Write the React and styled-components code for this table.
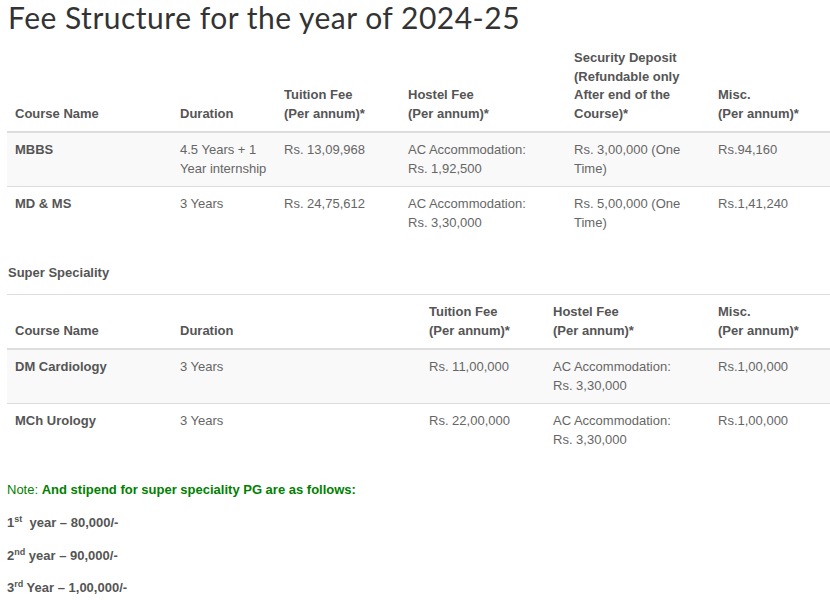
import styled, { createGlobalStyle } from 'styled-components'

/* ── Page defaults ─────────────────────────────────────────── */
const GlobalStyle = createGlobalStyle`
  html, body {
    margin: 0;
    padding: 0;
    background: #fff;
    overflow-x: hidden;
  }
  body {
    font-family: "Liberation Sans", Arial, sans-serif;
    font-size: 13px;
    line-height: 1.42857;
    color: #666;
  }
`

const Page = styled.div`
  padding: 0 0 0 7px;
  width: 823px;
`

const Heading = styled.h2`
  font-family: Lato, "Open Sans", sans-serif;
  font-weight: 400;
  font-size: 30px;
  line-height: 34px;
  color: #333;
  margin: 0 0 7px 1px;
  letter-spacing: 0.5px;
`

/* ── Table ─────────────────────────────────────────────────── */
const Table = styled.table`
  width: 100%;
  border-collapse: collapse;
  border-spacing: 0;
  table-layout: fixed;
  margin-bottom: ${p => p.$gap}px;
`

const Th = styled.th`
  text-align: left;
  vertical-align: bottom;
  font-weight: 700;
  color: #555;
  padding: 8px;
  border-bottom: 2px solid #ddd;
  border-top: ${p => (p.$top ? '1px solid #ddd' : '0')};
`

const Row = styled.tr`
  background: ${p => (p.$striped ? '#f9f9f9' : 'transparent')};
`

const Td = styled.td`
  padding: 8px;
  vertical-align: top;
  border-top: ${p => (p.$first ? '0' : '1px solid #ddd')};
  font-weight: ${p => (p.$bold ? 700 : 400)};
  color: ${p => (p.$bold ? '#555' : '#666')};
`

const SubHeading = styled.p`
  margin: 0 0 12px 1px;
  font-weight: 700;
  color: #555;
`

/* ── Notes ─────────────────────────────────────────────────── */
const Note = styled.p`
  margin: 0 0 14px 0;
  color: #008000;
  strong { font-weight: 700; }
`

const Stipend = styled.p`
  margin: 0 0 14px 0;
  font-weight: 700;
  color: #555;
  sup {
    font-size: 9px;
    line-height: 0;
    vertical-align: baseline;
    position: relative;
    top: -5px;
  }
`

const mainCols = [165, 104, 124, 166, 144, 120]
const superCols = [165, 249, 124, 165, 120]

const mainHead = [
  'Course Name',
  'Duration',
  <>Tuition Fee<br />(Per annum)*</>,
  <>Hostel Fee<br />(Per annum)*</>,
  <>Security Deposit<br />(Refundable only<br />After end of the<br />Course)*</>,
  <>Misc.<br />(Per annum)*</>,
  '',
]

const mainRows = [
  ['MBBS', '4.5 Years + 1 Year internship', 'Rs. 13,09,968', <>AC Accommodation:<br />Rs. 1,92,500</>, 'Rs. 3,00,000 (One Time)', 'Rs.94,160'],
  ['MD & MS', '3 Years', 'Rs. 24,75,612', <>AC Accommodation:<br />Rs. 3,30,000</>, 'Rs. 5,00,000 (One Time)', 'Rs.1,41,240'],
]

const superHead = [
  'Course Name',
  'Duration',
  <>Tuition Fee<br />(Per annum)*</>,
  <>Hostel Fee<br />(Per annum)*</>,
  <>Misc.<br />(Per annum)*</>,
]

const superRows = [
  ['DM Cardiology', '3 Years', 'Rs. 11,00,000', <>AC Accommodation:<br />Rs. 3,30,000</>, 'Rs.1,00,000'],
  ['MCh Urology', '3 Years', 'Rs. 22,00,000', <>AC Accommodation:<br />Rs. 3,30,000</>, 'Rs.1,00,000'],
]

const FeeTable = ({ cols, head, rows, topLine, gap }) => (
  <Table $gap={gap}>
    <colgroup>
      {cols.map((w, i) => <col key={i} style={{ width: w }} />)}
    </colgroup>
    <thead>
      <tr>
        {cols.map((_, i) => <Th key={i} $top={topLine}>{head[i]}</Th>)}
      </tr>
    </thead>
    <tbody>
      {rows.map((r, ri) => (
        <Row key={ri} $striped={ri % 2 === 0}>
          {cols.map((_, ci) => (
            <Td key={ci} $first={ri === 0} $bold={ci === 0}>{r[ci]}</Td>
          ))}
        </Row>
      ))}
    </tbody>
  </Table>
)

export default function App() {
  return (
    <>
      <GlobalStyle />
      <Page>
        <Heading>Fee Structure for the year of 2024-25</Heading>
        <FeeTable cols={mainCols} head={mainHead} rows={mainRows} gap={23} />
        <SubHeading>Super Speciality</SubHeading>
        <FeeTable cols={superCols} head={superHead} rows={superRows} topLine gap={24} />
        <Note>Note: <strong>And stipend for super speciality PG are as follows:</strong></Note>
        <Stipend>1<sup>st</sup>&nbsp; year – 80,000/-</Stipend>
        <Stipend>2<sup>nd</sup> year – 90,000/-</Stipend>
        <Stipend>3<sup>rd</sup> Year – 1,00,000/-</Stipend>
      </Page>
    </>
  )
}
